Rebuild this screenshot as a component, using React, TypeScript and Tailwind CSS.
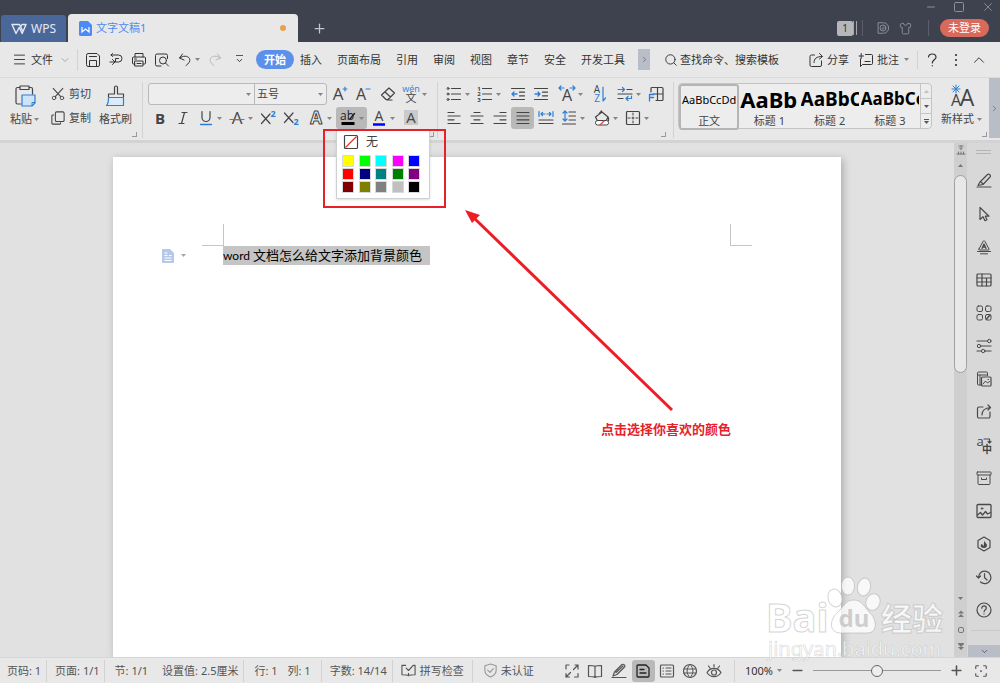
import React from 'react';
import { ChevronDown, ChevronRight, ChevronUp, Menu, Minus, Plus, Search, Shirt, Square, X } from 'lucide-react';

type IconProps = { children: React.ReactNode; className?: string; box?: string };

function Icon({ children, className = 'size-4', box = '0 0 16 16' }: IconProps) {
  return (
    <svg viewBox={box} className={`${className} shrink-0 overflow-visible`} fill="none" stroke="currentColor" strokeWidth="1" strokeLinecap="round" strokeLinejoin="round" aria-hidden="true">
      {children}
    </svg>
  );
}

function Glyph({ x, y, size, children, fill = '#444', bold }: { x: number; y: number; size: number; children: string; fill?: string; bold?: boolean }) {
  return (
    <text x={x} y={y} fontSize={size} fill={fill} stroke="none" textAnchor="middle" fontFamily="'Open Sans','Noto Sans CJK SC',sans-serif" fontWeight={bold ? 700 : 400}>
      {children}
    </text>
  );
}

function Caret({ className = 'text-[#858585]' }: { className?: string }) {
  return (
    <svg viewBox="0 0 5 3" className={`h-[3px] w-[5px] shrink-0 ${className}`} fill="currentColor" aria-hidden="true">
      <path d="M0 0h5L2.5 3z" />
    </svg>
  );
}

function Divider({ className = 'h-[22px]' }: { className?: string }) {
  return <span className={`w-px shrink-0 bg-[#d2d2d2] ${className}`} />;
}

function Tool({ label, caret, active, className = '', children }: { label: string; caret?: boolean; active?: boolean; className?: string; children: React.ReactNode }) {
  return (
    <button
      type="button"
      aria-label={label}
      title={label}
      className={`flex h-[22px] shrink-0 items-center justify-center gap-[3px] rounded-[3px] ${caret ? 'w-[31px]' : 'w-[23px]'} ${active ? 'bg-[#b9b9b9]' : ''} ${className}`}
    >
      {children}
      {caret && <Caret />}
    </button>
  );
}

function Corner({ className = '' }: { className?: string }) {
  return <span className={`-mb-[3px] size-[5px] shrink-0 self-end border-r border-b border-[#999] ${className}`} />;
}

function GroupEnd({ className = '' }: { className?: string }) {
  return <Divider className={`-mb-1 h-14 self-end ${className}`} />;
}

const BLUE = '#2b7fd6';

const menuTabs = ['插入', '页面布局', '引用', '审阅', '视图', '章节', '安全', '开发工具'];

const highlightColors = [
  '#ffff00', '#00ff00', '#00ffff', '#ff00ff', '#0000ff',
  '#ff0000', '#000080', '#008080', '#008000', '#800080',
  '#800000', '#808000', '#808080', '#c0c0c0', '#000000',
];

const styles = [
  { name: '标题 1', sample: 'AaBb', size: 'text-[22px]' },
  { name: '标题 2', sample: 'AaBbC', size: 'text-[19px]' },
  { name: '标题 3', sample: 'AaBbCc', size: 'text-[17px]' },
];

function TitleBar() {
  return (
    <header className="flex h-[42px] shrink-0 items-end bg-[#3e414e]">
      <button type="button" className="ml-px flex h-[27px] w-[65px] items-center justify-center gap-1 rounded-t-[3px] bg-[#4a6799] text-[12px] text-[#e6e9f0]">
        <Icon className="h-3 w-4" box="0 0 16 12">
          <path strokeWidth="1.4" d="M1 1.5h7.5l3 6M1 1.5l4 9 3.2-6 3 6L15 1.5h-4L9.5 4" />
        </Icon>
        WPS
      </button>
      <div className="ml-0.5 flex h-7 w-[230px] items-center rounded-t-[4px] bg-[#e8e8e8] pr-3 pl-[11px] text-[11px] text-[#4f8af0]">
        <svg viewBox="0 0 13 15" className="h-[15px] w-[13px]" aria-hidden="true">
          <path fill="#4c8bf5" d="M1.5 0H9l4 4v9.5a1.5 1.5 0 0 1-1.5 1.5h-10A1.5 1.5 0 0 1 0 13.5v-12A1.5 1.5 0 0 1 1.5 0z" />
          <path fill="none" stroke="#fff" strokeWidth="1.2" d="M3 6v5l3.500-3 3.500 3V6" />
        </svg>
        <span className="ml-1 flex-1">文字文稿1</span>
        <span className="size-[6px] rounded-full bg-[#e9a150]" />
      </div>
      <button type="button" aria-label="新建" className="ml-[14px] flex h-7 items-center text-[#c4c6cc]">
        <Plus size={15} strokeWidth={2} />
      </button>
      <div className="ml-auto flex h-full flex-col items-end text-[#8d9099]">
        <div className="flex h-[14px] items-center gap-[16px] pr-[5px]">
          <button type="button" aria-label="最小化"><Minus size={12} strokeWidth={2} /></button>
          <button type="button" aria-label="最大化"><Square size={12} strokeWidth={2} /></button>
          <button type="button" aria-label="关闭"><X size={14} strokeWidth={1.5} /></button>
        </div>
        <div className="flex h-7 items-center pr-[11px]">
          <span className="flex h-[15px] w-[16px] items-center justify-center rounded-[2px] bg-[#b5b7bb] text-[10px] text-[#333]">1</span>
          <span className="h-[14px] w-1 border-x border-[#a5a7ad]" />
          <span className="ml-[5px] h-4 w-px bg-[#5c5f6a]" />
          <button type="button" aria-label="文档" className="ml-[14px]">
            <Icon className="size-3">
              <path strokeWidth="1.3" d="M2 1h6.5a7 7 0 0 1 0 14H2z" />
              <circle cx="8" cy="8" r="4" strokeWidth="1.3" />
              <path strokeWidth="1.3" d="M6 9.500l3-3M8 10l2-2" />
            </Icon>
          </button>
          <button type="button" aria-label="皮肤" className="ml-[10px]"><Shirt size={13} strokeWidth={1.7} /></button>
          <span className="ml-4 h-4 w-px bg-[#5c5f6a]" />
          <button type="button" className="ml-[11px] h-[18px] rounded-full bg-[#d96a5b] px-2 leading-[18px] text-white">未登录</button>
        </div>
      </div>
    </header>
  );
}

function MenuBar() {
  return (
    <nav className="flex h-9 shrink-0 items-center border-b border-[#d9d9d9] px-3">
      <button type="button" className="flex items-center gap-1">
        <Menu size={15} strokeWidth={1.5} />
        文件
        <ChevronDown size={12} strokeWidth={1.3} className="ml-0.5 text-[#888]" />
      </button>
      <Divider className="ml-[6px] h-[22px]" />
      <div className="ml-[7px] flex items-center gap-[7px]">
        <button type="button" aria-label="保存">
          <Icon><path d="M1.5 3A1.5 1.500 0 0 1 3 1.500h9l2.500 2.500v9a1.500 1.500 0 0 1-1.500 1.500H3A1.500 1.500 0 0 1 1.500 13zM4.500 4.500h7M4.500 14V8.500h7V14" /></Icon>
        </button>
        <button type="button" aria-label="输出">
          <Icon><path d="M3 3h7.500a3.300 3.300 0 0 1 0 7H7.500V6.500h3M2 10h5M4.500 7.500L7 10l-2.500 2.500M4.500 1.500L3 3l1.500 1.500" /></Icon>
        </button>
        <button type="button" aria-label="打印">
          <Icon><path d="M4 5V1.500h8V5M4 12H2.500a1 1 0 0 1-1-1V6a1 1 0 0 1 1-1h11a1 1 0 0 1 1 1v5a1 1 0 0 1-1 1H12M4 9h8v5H4zM3.500 7h2M6 11.500h4" /></Icon>
        </button>
        <button type="button" aria-label="打印预览">
          <Icon><path d="M7 14H3a1.500 1.500 0 0 1-1.500-1.500V3.500A1.500 1.500 0 0 1 3 2h9a1.500 1.500 0 0 1 1.500 1.500v3" /><circle cx="9" cy="8.500" r="3.500" /><path d="M11.500 11l3 3" /></Icon>
        </button>
        <button type="button" aria-label="撤销" className="flex items-center gap-0.5">
          <Icon><path d="M5.500 2L2.500 6l4.500 2M2.800 6c3-2.500 8-2.500 9.700.5 1 2.500-.5 5-3.500 7" /></Icon>
          <Caret />
        </button>
      </div>
      <button type="button" aria-label="恢复" className="ml-[7px] text-[#b9b9b9]">
        <Icon><path d="M10.500 2l3 4L9 8M13.200 6c-3-2.500-8-2.500-9.700.5-1 2.500.5 5 3.500 7" /></Icon>
      </button>
      <button type="button" aria-label="更多" className="ml-3 flex flex-col items-center gap-0.5">
        <span className="h-px w-[7px] bg-[#555]" />
        <ChevronDown size={9} strokeWidth={2.5} className="-mt-0.5" />
      </button>
      <button type="button" className="ml-3 h-[19px] rounded-full bg-[#5c90ea] px-2 font-bold text-white">开始</button>
      <div className="mr-[13px] ml-[6px] flex flex-1 justify-between">
        {menuTabs.map(tab => (
          <button key={tab} type="button">{tab}</button>
        ))}
      </div>
      <button type="button" aria-label="更多选项卡" className="flex h-[21px] w-3 items-center justify-center bg-[#b9bdc7] text-[#666]">
        <ChevronRight size={9} strokeWidth={2} />
      </button>
      <label className="ml-[14px] flex items-center gap-0.5">
        <Search size={14} strokeWidth={1.6} />
        <input type="text" aria-label="搜索" placeholder="查找命令、搜索模板" className="w-[106px] bg-transparent outline-none placeholder:text-[#333]" />
      </label>
      <button type="button" className="ml-[22px] flex items-center gap-[3px]">
        <Icon><path d="M6.500 3H3.500A1.500 1.500 0 0 0 2 4.500V13a1.500 1.500 0 0 0 1.500 1.500h8.500a1.500 1.500 0 0 0 1.500-1.500V9M6 10.500c0-4 2.500-6 8-6M11.500 1.500l3 3-3 2.500" /></Icon>
        分享
      </button>
      <button type="button" className="ml-[9px] flex items-center gap-[3px]">
        <Icon><path d="M2.500 7v7.500l2-2h9a1 1 0 0 0 1-1V3.500a1 1 0 0 0-1-1H7.500M1 4h4.500M3.200 1.500v5M7 9.500h5" /></Icon>
        批注
        <Caret className="ml-0.5 text-[#858585]" />
      </button>
      <Divider className="ml-2 h-[18px]" />
      <button type="button" aria-label="帮助" className="ml-[6px]">
        <Icon><path strokeWidth="1.2" d="M4.500 5c0-4 7.500-4 7.500.2 0 2.500-3.700 2.800-3.700 5.800M8.300 13.500v.3" /></Icon>
      </button>
      <button type="button" aria-label="选项" className="ml-[13px] flex flex-col items-center gap-[3px] px-0.5">
        <span className="size-0.5 bg-[#555]" />
        <span className="size-0.5 bg-[#555]" />
        <span className="size-0.5 bg-[#555]" />
      </button>
      <button type="button" aria-label="收起功能区" className="ml-[11px]"><ChevronUp size={18} strokeWidth={1.3} /></button>
    </nav>
  );
}

function HighlightMenu() {
  return (
    <div className="absolute top-[23px] left-0 z-10 w-[94px] border border-[#d0d0d0] bg-white pt-[3px] pr-[9px] pb-[5px] pl-[5px] shadow">
      <button type="button" className="flex h-[15px] items-center gap-2 pl-0.5 text-[12px] leading-[15px] text-[#444]">
        <Icon className="size-[14px]" box="0 0 14 14">
          <rect x=".5" y=".5" width="13" height="13" rx="1" strokeWidth="1.2" />
          <path stroke="#e03226" strokeWidth="1.3" d="M2 12L12 2" />
        </Icon>
        无
      </button>
      <div className="mt-[6px] grid grid-cols-[repeat(5,12px)] justify-between gap-y-px">
        {highlightColors.map(color => (
          <button key={color} type="button" aria-label={color} className="size-3 border border-[#d8d8d8]" style={{ backgroundColor: color }} />
        ))}
      </div>
    </div>
  );
}

function ClipboardGroup() {
  return (
    <div className="flex h-full shrink-0 items-center">
      <button type="button" className="ml-[10px] flex flex-col items-center gap-1">
        <Icon className="h-[22px] w-6" box="0 0 24 22">
          <path strokeWidth="1.200" d="M8 19H4.500A1.500 1.500 0 0 1 3 17.500V4a1.500 1.500 0 0 1 1.500-1.500H7M16 2.500h2A1.500 1.500 0 0 1 19.500 4v5M7 1h9v3.500H7z" />
          <path fill="#cfe3f8" stroke={BLUE} strokeWidth="1.2" d="M9 10h13v8l-3 3H9z" />
          <path stroke={BLUE} d="M19 20.500v-3h3" />
        </Icon>
        <span className="flex items-center gap-0.5">粘贴<Caret /></span>
      </button>
      <div className="ml-3 flex flex-col gap-0.5">
        <button type="button" className="flex h-[22px] items-center gap-1">
          <Icon className="size-[14px]"><circle cx="3.5" cy="12.5" r="2" /><circle cx="12.5" cy="12.5" r="2" /><path strokeWidth="1.2" d="M2.500 1.500l8.600 9.500M13.500 1.500L4.900 11" /></Icon>
          剪切
        </button>
        <button type="button" className="flex h-[22px] items-center gap-1">
          <Icon className="size-[14px]"><rect x="5" y="1" width="10" height="11" rx="1.5" strokeWidth="1.2" /><path strokeWidth="1.2" d="M3 4.500H2a1 1 0 0 0-1 1V14a1 1 0 0 0 1 1h8a1 1 0 0 0 1-1v-.5" /></Icon>
          复制
        </button>
      </div>
      <button type="button" className="ml-2 flex flex-col items-center gap-1">
        <Icon className="h-[22px] w-5" box="0 0 20 22">
          <path strokeWidth="1.2" d="M2.500 12V9h6V2.500a1.500 1.500 0 0 1 3 0V9h6v3" />
          <path fill="#dcebfb" stroke={BLUE} strokeWidth="1.2" d="M2.500 12.500h15v8h-17c2-1.500 2-4 2-8z" />
        </Icon>
        格式刷
      </button>
      <Corner />
      <GroupEnd className="ml-[5px]" />
    </div>
  );
}

function FontGroup() {
  return (
    <div className="flex h-full shrink-0 items-center">
      <div className="ml-[5px] flex flex-col gap-0.5">
        <div className="flex items-center">
          <div className="flex h-[22px] w-[179px] items-center rounded-[3px] border border-[#b8b8b8] bg-[#ededed]">
            <input type="text" aria-label="字体" className="w-[97px] bg-transparent pl-1 outline-none" />
            <Caret />
            <label className="ml-[3px] flex h-full flex-1 items-center border-l border-[#b8b8b8] pr-[3px] pl-0.5">
              <select aria-label="字号" className="flex-1 appearance-none bg-transparent outline-none">
                <option>五号</option>
              </select>
              <Caret />
            </label>
          </div>
          <Tool label="增大字号" className="ml-px"><Icon><Glyph x={6} y={14} size={17}>A</Glyph><path stroke={BLUE} strokeWidth="1.2" d="M11 3h4M13 1v4" /></Icon></Tool>
          <Tool label="减小字号"><Icon><Glyph x={6} y={14} size={16}>A</Glyph><path stroke={BLUE} strokeWidth="1.2" d="M11 3h4" /></Icon></Tool>
          <Tool label="清除格式" className="ml-0.5"><Icon><path strokeWidth="1.2" d="M6 13.500L1.500 9l7.500-7L14.500 7 8 13.500zM5 6l5.500 5M7 14h5" /></Icon></Tool>
          <Tool label="拼音指南" caret>
            <Icon className="h-5 w-4" box="0 0 16 20"><Glyph x={8} y={8} size={9} fill={BLUE}>wén</Glyph><Glyph x={8} y={18} size={11}>文</Glyph></Icon>
          </Tool>
        </div>
        <div className="flex items-center">
          <Tool label="加粗"><Icon><Glyph x={8} y={13.5} size={15} bold>B</Glyph></Icon></Tool>
          <Tool label="倾斜"><Icon><path strokeWidth="1.2" d="M7 2.500h5M4 13.500h5M9.500 2.500l-3 11" /></Icon></Tool>
          <Tool label="下划线" caret><Icon><path strokeWidth="1.2" d="M4 1.500v6a4 4 0 0 0 8 0v-6" /><path stroke={BLUE} strokeWidth="1.3" d="M2.500 14.500h11" /></Icon></Tool>
          <Tool label="删除线" caret><Icon><Glyph x={8} y={14} size={17}>A</Glyph><path stroke="#dc4a4a" strokeWidth="1.2" d="M1 9.500h14" /></Icon></Tool>
          <Tool label="上标"><Icon><path strokeWidth="1.2" d="M1.500 4l8.500 9.500M10 4l-8.500 9.500" /><Glyph x={13} y={7} size={9} fill={BLUE} bold>2</Glyph></Icon></Tool>
          <Tool label="下标"><Icon><path strokeWidth="1.2" d="M1.500 3l8.500 9.500M10 3l-8.500 9.500" /><Glyph x={13} y={15} size={9} fill={BLUE} bold>2</Glyph></Icon></Tool>
          <Tool label="文字效果" caret className="ml-0.5">
            <Icon><text x="8" y="14" fontSize="17" fontWeight="700" textAnchor="middle" fontFamily="'Open Sans',sans-serif" fill="#f4f4f4" stroke="#444" strokeWidth="1">A</text></Icon>
          </Tool>
          <div className="relative ml-px">
            <Tool label="突出显示" caret active>
              <Icon><Glyph x={7} y={10} size={12} fill="#222">ab</Glyph><path stroke="#222" d="M10 9l4.500-5.500" strokeWidth="1.5" /><path stroke="#000" strokeWidth="3" strokeLinecap="butt" d="M1.500 13.500h13" /></Icon>
            </Tool>
            <HighlightMenu />
          </div>
          <Tool label="字体颜色" caret><Icon><Glyph x={8} y={11} size={14}>A</Glyph><path stroke="#00f" strokeWidth="2.500" d="M2 14.500h12" strokeLinecap="butt" /></Icon></Tool>
          <Tool label="字符底纹" className="ml-px"><Icon><path fill="#cacaca" stroke="none" d="M1 0h14v15H1z" /><Glyph x={8} y={13} size={15}>A</Glyph></Icon></Tool>
        </div>
      </div>
      <Corner className="-ml-px" />
      <GroupEnd className="ml-[3px]" />
    </div>
  );
}

function ParagraphGroup() {
  return (
    <div className="flex h-full shrink-0 items-center">
      <div className="ml-1 flex flex-col gap-0.5">
        <div className="flex items-center">
          <Tool label="项目符号" caret><Icon><circle cx="2" cy="2.5" r="1" /><circle cx="2" cy="8" r="1" /><circle cx="2" cy="13.5" r="1" /><path strokeWidth="1.2" d="M5.500 2.500h9M5.500 8h9M5.500 13.500h9" /></Icon></Tool>
          <Tool label="编号" caret>
            <Icon><Glyph x={2} y={4.5} size={6} bold>1</Glyph><Glyph x={2} y={10} size={6} bold>2</Glyph><Glyph x={2} y={15.5} size={6} bold>3</Glyph><path strokeWidth="1.2" d="M5.500 2.500h9M5.500 8h9M5.500 13.500h9" /></Icon>
          </Tool>
          <Tool label="减少缩进量" className="ml-0.5"><Icon><path strokeWidth="1.2" d="M1.500 2.500h13M9.500 6.200h5M9.500 9.800h5M1.500 13.500h13" /><path stroke={BLUE} strokeWidth="1.3" d="M7 8H2M4 6L2 8l2 2" /></Icon></Tool>
          <Tool label="增加缩进量"><Icon><path strokeWidth="1.2" d="M1.500 2.500h13M9.500 6.200h5M9.500 9.800h5M1.500 13.500h13" /><path stroke={BLUE} strokeWidth="1.3" d="M2 8h5M5 6l2 2-2 2" /></Icon></Tool>
          <Tool label="中文版式" caret className="ml-[3px]"><Icon><Glyph x={8} y={15} size={16}>A</Glyph><path stroke={BLUE} strokeWidth="1.2" d="M5 2H0M2 0L0 2l2 2M11 2h5M14 0l2 2-2 2" /></Icon></Tool>
          <Tool label="排序" className="ml-px"><Icon><Glyph x={6} y={7} size={10}>A</Glyph><Glyph x={6} y={16} size={10} fill={BLUE}>Z</Glyph><path stroke={BLUE} strokeWidth="1.2" d="M12 1v14l2.500-3" /></Icon></Tool>
          <Tool label="显示标记" caret className="ml-[3px]"><Icon><path d="M10 3.500h5M1 8h14M1 12.500h5" strokeWidth="1.2" /><path stroke={BLUE} strokeWidth="1.2" d="M1 3.500h6M5.500 1.500l2 2-2 2M14.500 10v2.500H9M11 10.500l-2 2 2 2" /></Icon></Tool>
          <Tool label="制表位"><Icon><path strokeWidth="1.2" d="M3 6V2.500a1 1 0 0 1 1-1h10a1 1 0 0 1 1 1v11a1 1 0 0 1-1 1H8M9.500 1.500v13M5 8h10" /><path stroke={BLUE} strokeWidth="1.3" d="M6 8.500H1.500V15M1.500 11.500h4" /></Icon></Tool>
        </div>
        <div className="flex items-center">
          <Tool label="左对齐"><Icon><path strokeWidth="1.2" d="M2 2.500h6M2 6h12M2 9.800h6M2 13.500h12" /></Icon></Tool>
          <Tool label="居中对齐"><Icon><path strokeWidth="1.2" d="M5 2.500h6M2 6h12M5 9.800h6M2 13.500h12" /></Icon></Tool>
          <Tool label="右对齐"><Icon><path strokeWidth="1.2" d="M8 2.500h6M2 6h12M8 9.800h6M2 13.500h12" /></Icon></Tool>
          <Tool label="两端对齐" active><Icon><path strokeWidth="1.2" d="M2 2.500h12M2 6h12M2 9.800h12M2 13.500h12" /></Icon></Tool>
          <Tool label="分散对齐"><Icon><path strokeWidth="1.2" d="M1 10h14M1 13.500h14" /><path stroke={BLUE} strokeWidth="1.2" d="M1 1.500v5M15 1.500v5M7 4H3M4.500 2.500L3 4l1.500 1.500M9 4h4M11.500 2.500L13 4l-1.500 1.500" /></Icon></Tool>
          <Tool label="行距" caret><Icon><path strokeWidth="1.2" d="M8 2h6.500M8 6h6.500M8 10h6.500M1.500 14h13" /><path stroke={BLUE} strokeWidth="1.2" d="M4 1v10M2 3l2-2 2 2M2 9l2 2 2-2" /></Icon></Tool>
          <Tool label="底纹颜色" caret className="ml-0.5"><Icon><path strokeWidth="1.2" d="M3 10L1.500 7 8 2l6 5-1.500 3M5 4L7.500 1M14.500 7.500v3" /><rect x="1.5" y="10.5" width="13" height="4.500" rx="2" fill="#fff" /><path stroke="#dc4a4a" strokeWidth="1.3" d="M6 15l4-4" /></Icon></Tool>
          <Tool label="边框" caret><Icon><rect x="1.5" y="1.5" width="13" height="13" rx="1" strokeWidth="1.2" /><path strokeDasharray="2 2" d="M8 3v11M3 8h11" /></Icon></Tool>
        </div>
      </div>
      <Corner className="-ml-[6px]" />
      <GroupEnd className="ml-[7px]" />
    </div>
  );
}

function StyleGallery() {
  return (
    <div className="flex h-full min-w-0 flex-1 items-center">
      <div className="ml-1 flex h-[46px] min-w-0 flex-1 rounded-[4px] border border-[#c4c4c4] bg-[#ededed]">
        <div className="grid min-w-0 flex-1 grid-cols-4">
          <button type="button" className="flex min-w-0 flex-col items-center rounded-[3px] border-2 border-[#b5b5b5]">
            <span className="h-7 text-[11px] leading-[28px] text-black">AaBbCcDd</span>
            <span className="leading-[14px]">正文</span>
          </button>
          {styles.map(style => (
            <button key={style.name} type="button" className="flex min-w-0 flex-col px-px">
              <span className={`h-[30px] w-full overflow-hidden text-left leading-[30px] font-bold whitespace-nowrap text-black ${style.size}`}>{style.sample}</span>
              <span className="w-full text-center leading-[14px]">{style.name}</span>
            </button>
          ))}
        </div>
        <div className="flex w-[11px] flex-col divide-y divide-[#c4c4c4] border-l border-[#c4c4c4]">
          <button type="button" aria-label="上一行" className="flex flex-1 items-center justify-center"><Caret className="rotate-180 text-[#c0c0c0]" /></button>
          <button type="button" aria-label="下一行" className="flex flex-1 items-center justify-center"><Caret className="text-[#555]" /></button>
          <button type="button" aria-label="展开样式" className="flex flex-1 flex-col items-center justify-center gap-px"><span className="h-px w-[5px] bg-[#555]" /><Caret className="text-[#555]" /></button>
        </div>
      </div>
      <button type="button" className="ml-[9px] flex shrink-0 flex-col items-start gap-[3px]">
        <Icon className="ml-2 h-[23px] w-[26px]" box="0 0 26 23">
          <Glyph x={7} y={21} size={16}>A</Glyph>
          <Glyph x={18} y={21} size={23}>A</Glyph>
          <path stroke={BLUE} d="M7 0v8M3 4h8M4 1l6 6M10 1L4 7" />
        </Icon>
        <span className="flex items-center gap-[3px]">新样式<Caret /></span>
      </button>
      <Corner className="mr-0.5" />
    </div>
  );
}

const sideTools = [
  { label: '编辑', art: <path strokeWidth="1.2" d="M1 14h14M2 12.500L4 9l7.500-7.500c1.500-1 4 .8 2.500 2.500L7 11.500l-5 1zM4.500 8.500l2.500 2.500" /> },
  { label: '选择', art: <path strokeWidth="1.2" d="M4 1.500v12l3-2.800 2 4 2-1-1.700-3.500h3.700z" /> },
  { label: '样式', art: <><path d="M3 10L7 2.500c.5-1 1.500-1 2 0L13 10c.3.800 0 1-.8 1H3.800c-.8 0-1.100-.2-.8-1zM1.500 12.500h13M4.500 14.800h7" /><path d="M6 9.500l2-4.500 2 4.500M6.800 8h2.500" strokeWidth="1.3" /></> },
  { label: '表格', art: <><rect x="1" y="2" width="14" height="12" rx="1" strokeWidth="1.2" /><path d="M1 6h14M1 10h14M6 2v12M10.500 6v8" strokeWidth="1.2" /></> },
  { label: '应用', art: <><rect x="1" y="1" width="5.500" height="5.500" rx="1.500" /><rect x="9.500" y="1" width="5.500" height="5.500" rx="1.500" /><rect x="1" y="9.500" width="5.500" height="5.500" rx="1.500" /><rect x="9.500" y="9.500" width="5.500" height="5.500" rx="1.500" /><path d="M10.500 14l3.500-4" strokeWidth="1.5" /></> },
  { label: '属性', art: <><path d="M1 3h10.500M5 8h10M1 13h4.500M9 13h6" strokeWidth="1.2" /><circle cx="13.300" cy="3" r="1.700" /><circle cx="3" cy="8" r="1.700" /><circle cx="7.200" cy="13" r="1.700" /></> },
  { label: '素材', art: <><path d="M4.500 14h-2a1 1 0 0 1-1-1V2a1 1 0 0 1 1-1h8a1 1 0 0 1 1 1v2.500M1.500 4h10M4 4v10" /><rect x="5.500" y="6" width="9.500" height="9" rx="1" strokeWidth="1.2" /><path d="M7 13l2.500-3 2 2 2-1.500M12 8.500h.5" /></> },
  { label: '分享', art: <path strokeWidth="1.2" d="M7 3H3a1.500 1.500 0 0 0-1.500 1.500v8A1.500 1.500 0 0 0 3 14h9.500a1.500 1.500 0 0 0 1.500-1.500V8M6 11c0-4 2.500-7 8.500-7.500M12 1l2.500 2.500L12 6" /> },
  { label: '翻译', art: <><Glyph x={4} y={9} size={13}>a</Glyph><Glyph x={11} y={15.5} size={10} bold>中</Glyph><path strokeWidth="1.2" d="M8 2h5.500v4M12 4.500L13.500 6 15 4.500" /></> },
  { label: '归档', art: <><rect x="1" y="2" width="14" height="3" rx=".5" /><path d="M2 5v8.500a1 1 0 0 0 1 1h10a1 1 0 0 0 1-1V5M5.500 8v1.500h5V8" /></> },
  { label: '图片', art: <><rect x="1" y="1.500" width="14" height="13" rx="1" strokeWidth="1.3" /><path strokeWidth="1.3" d="M1.500 12l3-2.500 2 2.500 3-3.500 2 2.500 3-1.500" /><circle cx="6" cy="5.500" r=".8" /></> },
  { label: '会员', art: <><path strokeWidth="1.200" d="M8 1l6 3.500v7L8 15l-6-3.500v-7z" /><path d="M8 12c-4 0-4-3.500-2-4 .5 1 1 1.500 2 2-.5-2.500 0-4 1-5.500 0 2 .5 2.500 1.500 3.500 1.500 2-.5 4-2.500 4z" fill="currentColor" stroke="none" /></> },
  { label: '历史', art: <path strokeWidth="1.2" d="M2.500 8.500a6.200 6.200 0 1 1 2 4.500M.5 7l2 2 2-2M8.500 4.500v4l2.500 2.500" /> },
  { label: '帮助中心', art: <><circle cx="8" cy="8" r="7" strokeWidth="1.2" /><path strokeWidth="1.2" d="M5.800 6.200c0-3 4.500-3 4.500 0 0 1.500-2.200 1.700-2.200 3.500M8 11.800v.2" /></> },
];

function Workspace() {
  return (
    <main className="flex min-h-0 flex-1 overflow-hidden border-t-[3px] border-[#d3d3d3] bg-[#e1e1e1]">
      <article className="mx-[113px] mt-[14px] flex min-w-0 flex-1 flex-col bg-white shadow-[2px_2px_8px_rgba(0,0,0,0.25)]">
        <div className="mt-[67px] flex justify-between px-[89px]">
          <span className="h-[22px] w-[22px] border-r border-b border-[#c6c6c6]" />
          <span className="h-[22px] w-[22px] border-b border-l border-[#c6c6c6]" />
        </div>
        <div className="flex items-center pl-[49px]">
          <button type="button" aria-label="段落布局" className="flex items-center gap-[6px]">
            <svg viewBox="0 0 13 14" className="h-[14px] w-[13px]" aria-hidden="true">
              <path fill="#b4c9ea" d="M1 0h7l4 4v9a1 1 0 0 1-1 1H1a1 1 0 0 1-1-1V1a1 1 0 0 1 1-1z" />
              <path stroke="#fff" d="M2.500 4h3M2.500 6.500h3M7 6.500h2.500M2.500 9h7M2.500 11.500h7" />
            </svg>
            <Caret className="text-[#a5a5a5]" />
          </button>
          <p className="ml-[37px] flex h-[19px] gap-[3px] bg-[#c5c5c5] pr-2 text-[13px] leading-[19px] whitespace-nowrap text-black">
            <span className="font-['Lato','Open_Sans',sans-serif] text-[12px]">word</span>
            <span>文档怎么给文字添加背景颜色</span>
          </p>
        </div>
      </article>
      <div className="flex w-[13px] shrink-0 flex-col items-center bg-[#cfcfcf] text-[#777]">
        <Icon className="mt-0.5 size-[10px]" box="0 0 10 10"><path d="M3 1h4M5 1v3M3.500 3L5 4.500 6.500 3M1 9h8M2.500 9V7M5 9V7M7.500 9V7" /></Icon>
        <Caret className="mt-[9px] rotate-180 text-[#777]" />
        <div className="mt-2 h-[198px] w-[13px] rounded-full border border-[#a0a0a0] bg-[#e8e8e8]" />
        <div className="mt-auto flex flex-col items-center gap-[10px] pb-[7px]">
          <Caret className="text-[#777]" />
          <Icon className="h-[7px] w-[6px]" box="0 0 6 7"><path d="M0 3.500L3 .5l3 3zM0 7l3-3 3 3z" fill="currentColor" stroke="none" /></Icon>
          <span className="size-[6px] rounded-[2px] border border-[#777]" />
          <Icon className="h-[7px] w-[6px]" box="0 0 6 7"><path d="M0 0h6v1H0zM0 1l3 3 3-3zM0 4l3 3 3-3z" fill="currentColor" stroke="none" /></Icon>
        </div>
      </div>
      <aside className="flex w-[33px] shrink-0 flex-col items-center bg-[#d8d8d8] text-[#4a4a4a]">
        <span className="mt-[7px] h-1 w-[15px] shrink-0 border-y border-[#b4b4b4]" />
        <div className="mt-[10px] flex flex-col">
          {sideTools.map(tool => (
            <button key={tool.label} type="button" aria-label={tool.label} title={tool.label} className="flex h-[33px] items-center">
              <Icon>{tool.art}</Icon>
            </button>
          ))}
        </div>
        <span className="mt-1 h-px w-[29px] shrink-0 self-end bg-[#c8c8c8]" />
        <button type="button" aria-label="展开侧栏" className="mt-auto flex h-3 w-8 shrink-0 items-center justify-center self-end bg-[#b9bdc7]">
          <ChevronDown size={9} strokeWidth={2} />
        </button>
      </aside>
    </main>
  );
}

function StatusBar() {
  return (
    <footer className="flex h-[26px] shrink-0 items-center border-t border-[#d5d5d5] pl-[7px] text-[#555]">
      <span>页码: 1</span>
      <Divider className="mr-2 ml-[5px] h-[22px]" />
      <span>页面: 1/1</span>
      <Divider className="mr-[10px] ml-1 h-[22px]" />
      <span>节: 1/1</span>
      <span className="ml-[14px]">设置值: 2.5厘米</span>
      <Divider className="mr-[10px] ml-[5px] h-[22px]" />
      <span>行: 1</span>
      <span className="ml-[10px]">列: 1</span>
      <Divider className="mr-2 ml-[10px] h-[22px]" />
      <span>字数: 14/14</span>
      <Divider className="mr-2 ml-[5px] h-[22px]" />
      <button type="button" className="flex items-center gap-1">
        <Icon className="size-[15px]"><path strokeWidth="1.2" d="M8 13.500c-1.500-1-4-1-7-1v-10h4M8 13.500c1.500-1 4-1 7-1v-10h-1.500M8 13.500V11M5.500 5.500L8 8l5-5.500" /></Icon>
        拼写检查
      </button>
      <Divider className="ml-2 h-[22px]" />
      <button type="button" className="ml-[10px] flex items-center gap-[3px]">
        <Icon className="size-[15px] text-[#999]"><path strokeWidth="1.2" d="M8 1l6 2v5c0 3-2.500 5.500-6 7-3.500-1.500-6-4-6-7V3zM5 7.500L7.500 10 11 6" /></Icon>
        未认证
      </button>
      <div className="ml-auto flex items-center">
        <Tool label="全屏显示"><Icon><path strokeWidth="1.2" d="M2 6V2h3M11 2h3v4M14 10.500V14h-3.500M5.500 14H2v-3.500M9.500 6.500L14 2M6.500 9.500L2 14" /></Icon></Tool>
        <Tool label="阅读版式"><Icon><path strokeWidth="1.2" d="M8 3.500C6.500 2.500 4 2.500 1.500 2.500v11c2.500 0 5 0 6.500 1 1.500-1 4-1 6.500-1v-11c-2.500 0-5 0-6.500 1zM8 3.500v11" /></Icon></Tool>
        <Tool label="写作模式" className="ml-px"><Icon><path strokeWidth="1.2" d="M1 14.500h14M2 13l1.500-4L11 1.500c1.500-.8 4 1 2.500 2.500L6 11.500zM5 9.500L12 3" /></Icon></Tool>
        <Tool label="页面视图" active className="ml-px text-[#222]"><Icon><path strokeWidth="1.3" d="M2 3a1 1 0 0 1 1-1h8l3 3v8a1 1 0 0 1-1 1H3a1 1 0 0 1-1-1zM5 6.500h4M5 10h6" /></Icon></Tool>
        <Tool label="大纲视图" className="ml-px"><Icon><rect x="1.500" y="2" width="13" height="12" rx="1" strokeWidth="1.2" /><path strokeWidth="1.2" d="M4 5h.5M7 5h5M4 8h.5M7 8h5M4 11h.5M7 11h5" /></Icon></Tool>
        <Tool label="Web版式"><Icon><circle cx="8" cy="8" r="6.500" strokeWidth="1.2" /><path d="M8 1.500c-4 3.500-4 9.500 0 13M8 1.500c4 3.500 4 9.500 0 13M2 6h12M2 10h12" /></Icon></Tool>
        <Tool label="护眼模式" className="ml-px"><Icon><path strokeWidth="1.2" d="M1 9.500C4.500 4 11.500 4 15 9.500 11.500 15 4.500 15 1 9.500zM2.500 3l1.500 2M8 1.500v2.300M13.500 3L12 5" /><circle cx="8" cy="9.500" r="2.500" strokeWidth="1.2" /></Icon></Tool>
        <Divider className="ml-2 h-[22px]" />
        <button type="button" className="ml-[10px] flex items-center gap-1 text-[#333]">100%<Caret /></button>
        <button type="button" aria-label="缩小" className="ml-2"><Minus size={15} strokeWidth={2.5} /></button>
        <input
          type="range"
          aria-label="显示比例"
          min={0}
          max={200}
          defaultValue={100}
          className="mx-2 h-3 w-[128px] appearance-none bg-[linear-gradient(#999,#999)] bg-[length:100%_1px] bg-center bg-no-repeat [&::-webkit-slider-thumb]:size-3 [&::-webkit-slider-thumb]:appearance-none [&::-webkit-slider-thumb]:rounded-full [&::-webkit-slider-thumb]:border [&::-webkit-slider-thumb]:border-[#666] [&::-webkit-slider-thumb]:bg-[#eee]"
        />
        <button type="button" aria-label="放大"><Plus size={15} strokeWidth={2.5} /></button>
        <button type="button" aria-label="最佳比例" className="mr-3 ml-[10px]">
          <Icon className="size-[14px]"><path strokeWidth="1.3" d="M2 5V3a1 1 0 0 1 1-1h2M11 2h2a1 1 0 0 1 1 1v2M14 11v2a1 1 0 0 1-1 1h-2M5 14H3a1 1 0 0 1-1-1v-2M8 7.500v1M7.500 8h1" /></Icon>
        </button>
      </div>
    </footer>
  );
}

// Tutorial marks drawn over the editor window
function Annotations() {
  return (
    <>
      <div className="pointer-events-none absolute top-[129px] left-[323px] z-20 h-[79px] w-[123px] border-2 border-[#e8202a]" />
      <svg viewBox="0 0 212 204" className="pointer-events-none absolute top-[208px] left-[463px] z-20 h-[204px] w-[212px]" aria-hidden="true">
        <path d="M209 202L10 9" stroke="#ee1c25" strokeWidth="3" />
        <path d="M2 2l15 5-8 8z" fill="#ee1c25" />
      </svg>
      <p className="absolute top-[420px] left-[601px] z-20 text-[13px] leading-[18px] font-bold text-[#e8202a]">点击选择你喜欢的颜色</p>
    </>
  );
}

function Watermark() {
  return (
    <svg viewBox="0 0 184 90" className="pointer-events-none absolute right-[51px] bottom-[20px] z-20 h-[90px] w-[184px] overflow-visible" fill="#fff" fillOpacity=".75" stroke="#aaa" strokeOpacity=".5" strokeWidth="1" fontFamily="'Noto Sans','Noto Sans CJK SC',sans-serif" aria-hidden="true">
      <text x="1" y="59" fontSize="40" fontWeight="700">Bai</text>
      <ellipse cx="70" cy="25" rx="7" ry="9" transform="rotate(-15 70 25)" />
      <ellipse cx="83" cy="13" rx="6.500" ry="9" />
      <ellipse cx="99" cy="14" rx="6.500" ry="9" transform="rotate(12 99 14)" />
      <ellipse cx="108" cy="29" rx="7" ry="8.500" transform="rotate(20 108 29)" />
      <path d="M89 27c8 0 11 8 16 13 6 5 9 20-3 20H76c-13 0-11-14-4-20 6-5 8-13 17-13z" />
      <text x="89" y="54" fontSize="24" fontWeight="700" textAnchor="middle" fill="#c0c0c0" stroke="none">du</text>
      <text x="116" y="57" fontSize="31" fontWeight="700">经验</text>
      <text x="3" y="83" fontSize="20" strokeWidth=".6">jingyan.baidu.com</text>
    </svg>
  );
}

export default function App() {
  return (
    <div className="relative flex h-screen w-full flex-col overflow-hidden bg-[#e8e8e8] font-['Noto_Sans','Noto_Sans_CJK_SC',sans-serif] text-[11px] leading-4 text-[#333]">
      <TitleBar />
      <MenuBar />
      <section className="relative z-10 flex h-[62px] shrink-0 text-[#444]">
        <div className="flex h-14 min-w-0 flex-1 items-center">
          <ClipboardGroup />
          <FontGroup />
          <ParagraphGroup />
          <StyleGallery />
        </div>
        <button type="button" aria-label="向右滚动" className="flex h-[60px] w-[11px] shrink-0 items-center justify-center bg-[#b9bdc7] text-[#666]">
          <ChevronRight size={9} strokeWidth={2} />
        </button>
      </section>
      <Workspace />
      <StatusBar />
      <Annotations />
      <Watermark />
    </div>
  );
}
